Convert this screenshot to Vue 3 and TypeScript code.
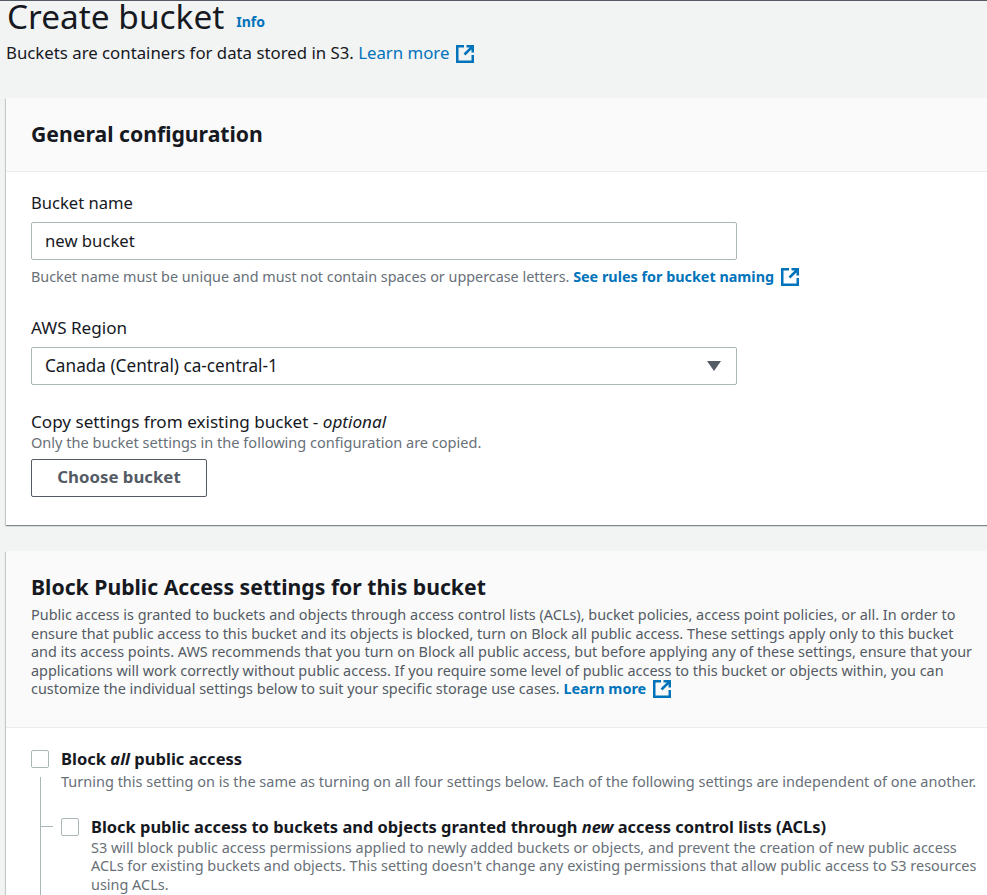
<script setup lang="ts">
const extPath = 'M8 1.2H1.2v15.6h15.6V10M10.5 1.2h6.3v6.3M16.2 1.8 8.5 9.5'
</script>

<template>
  <div class="page">
    <header class="head">
      <div class="title-row">
        <h1>Create bucket</h1>
        <a class="info">Info</a>
      </div>
      <p class="sub">
        Buckets are containers for data stored in S3.
        <a class="link">Learn more</a>
        <svg class="ext" viewBox="0 0 18 18" fill="none"><path :d="extPath" /></svg>
      </p>
    </header>

    <section class="card first">
      <div class="card-head plain">
        <h2>General configuration</h2>
      </div>
      <div class="card-body">
        <div class="field">
          <label>Bucket name</label>
          <div class="control">new bucket</div>
          <p class="hint">
            Bucket name must be unique and must not contain spaces or uppercase letters.
            <a class="link strong">See rules for bucket naming</a>
            <svg class="ext" viewBox="0 0 18 18" fill="none"><path :d="extPath" /></svg>
          </p>
        </div>
        <div class="field region">
          <label>AWS Region</label>
          <div class="control select">
            <span>Canada (Central) ca-central-1</span>
            <span class="caret"></span>
          </div>
        </div>
        <div class="field copy">
          <label>Copy settings from existing bucket - <em>optional</em></label>
          <p class="hint tight">Only the bucket settings in the following configuration are copied.</p>
          <button class="btn" type="button">Choose bucket</button>
        </div>
      </div>
    </section>

    <section class="card">
      <div class="card-head">
        <h2>Block Public Access settings for this bucket</h2>
        <p class="desc">
          Public access is granted to buckets and objects through access control lists (ACLs), bucket policies, access point policies, or all. In order to ensure that public access to this bucket and its objects is blocked, turn on Block all public access. These settings apply only to this bucket and its access points. AWS recommends that you turn on Block all public access, but before applying any of these settings, ensure that your applications will work correctly without public access. If you require some level of public access to this bucket or objects within, you can customize the individual settings below to suit your specific storage use cases.
          <a class="link strong">Learn more</a>
          <svg class="ext" viewBox="0 0 18 18" fill="none"><path :d="extPath" /></svg>
        </p>
      </div>
      <div class="block-body">
        <div class="check">
          <span class="box"></span>
          <div>
            <div class="check-title">Block <em>all</em> public access</div>
            <p class="hint flush">Turning this setting on is the same as turning on all four settings below. Each of the following settings are independent of one another.</p>
          </div>
        </div>
        <div class="tree">
          <div class="check nested">
            <span class="tick"></span>
            <span class="box"></span>
            <div>
              <div class="check-title">Block public access to buckets and objects granted through <em>new</em> access control lists (ACLs)</div>
              <p class="hint flush">S3 will block public access permissions applied to newly added buckets or objects, and prevent the creation of new public access ACLs for existing buckets and objects. This setting doesn't change any existing permissions that allow public access to S3 resources using ACLs.</p>
            </div>
          </div>
        </div>
      </div>
    </section>
  </div>
</template>

<style>
html, body { margin: 0; height: 100%; overflow: hidden; background: #f2f3f3; }
</style>

<style scoped>
.page {
  box-sizing: border-box;
  width: 987px;
  height: 895px;
  overflow: hidden;
  background: #f2f3f3;
  border-top: 1px solid #545b64;
  font-family: "Noto Sans", "Open Sans", sans-serif;
  color: #16191f;
  padding-left: 6px;
}
.head { height: 97px; }
.title-row { display: flex; align-items: flex-end; height: 30px; }
h1 { margin: 0 0 0 1px; font-size: 33.4px; font-weight: 400; line-height: 30px; }
.info { font-size: 14px; font-weight: 700; color: #0073bb; margin-left: 12px; line-height: 18px; }
.sub { margin: 11px 0 0; font-size: 16.8px; line-height: 22px; white-space: nowrap; }
.link { color: #0073bb; }
.link.strong { font-weight: 700; }
.ext { width: 18px; height: 18px; vertical-align: -4px; margin-left: 7px; stroke: #0073bb; stroke-width: 2.6; }
.card {
  width: 1000px;
  background: #fff;
  box-shadow: 0 1px 1px 0 rgba(0, 28, 36, .3), 1px 1px 1px 0 rgba(0, 28, 36, .15), -1px 1px 1px 0 rgba(0, 28, 36, .15);
}
.card.first { height: 427px; margin-bottom: 26px; }
.card-head {
  box-sizing: border-box;
  background: #fafafa;
  border-bottom: 1px solid #eaeded;
  padding: 21px 25px 0;
  height: 177px;
}
.card-head.plain { height: 74px; padding-top: 21px; }
h2 { margin: 0; font-size: 21.2px; line-height: 30px; font-weight: 700; }
.desc { margin: 4px 0 0; width: 950px; font-size: 14.43px; line-height: 18.5px; color: #545b64; }
.card-body { padding: 20px 25px 0; }
.field { margin-bottom: 30px; }
.field.region { margin-bottom: 26px; }
label { display: block; font-size: 16.6px; line-height: 22px; }
.region label, .copy label { font-size: 17.1px; }
.control {
  box-sizing: border-box;
  width: 706px;
  height: 38px;
  margin-top: 8px;
  padding: 0 13px 2px;
  display: flex;
  align-items: center;
  justify-content: space-between;
  background: #fff;
  border: 1px solid #aab7b8;
  border-radius: 2px;
  font-size: 16.7px;
}
.select { font-size: 17.2px; }
.caret {
  width: 0; height: 0;
  margin: 2px 2px 0 0;
  border-left: 7px solid transparent;
  border-right: 7px solid transparent;
  border-top: 10px solid #545b64;
}
.hint { margin: 7px 0 0; font-size: 14.37px; line-height: 20px; color: #687078; white-space: nowrap; }
.hint.tight { margin-top: -1px; font-size: 14.56px; }
.hint.flush { margin-top: 2px; white-space: normal; font-size: 14.5px; line-height: 18.5px; }
.btn {
  display: block;
  box-sizing: border-box;
  width: 176px;
  height: 38px;
  margin-top: 7px;
  padding: 0 0 3px;
  background: #fff;
  border: 1px solid #545b64;
  border-radius: 2px;
  color: #545b64;
  font: 700 16.8px "Noto Sans", "Open Sans", sans-serif;
}
.block-body { padding: 20px 25px 0; }
.check { display: flex; gap: 12px; width: 950px; }
.box {
  flex: none;
  box-sizing: border-box;
  width: 18px; height: 18px;
  margin-top: 2px;
  background: #fff;
  border: 1px solid #aab7b8;
  border-radius: 2px;
}
.check-title { font-size: 16.55px; line-height: 22px; font-weight: 700; white-space: nowrap; }
.check-title em { font-weight: 700; }
.tree { margin: -14px 0 0 9px; border-left: 1px solid #aab7b8; height: 200px; padding: 39px 0 0 20px; }
.check.nested { position: relative; width: 920px; }
.tick { position: absolute; left: -20px; top: 10px; width: 12px; border-top: 1px solid #aab7b8; }
.nested .check-title { font-size: 16.45px; }
.nested .hint.flush { margin-top: 1px; font-size: 14.45px; }
</style>
